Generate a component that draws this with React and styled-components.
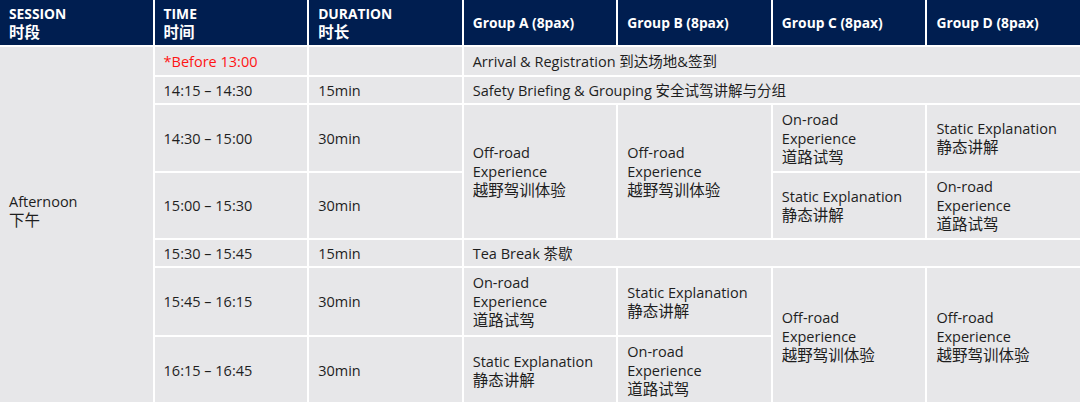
import React from 'react';
import styled, { createGlobalStyle } from 'styled-components';

const GlobalStyle = createGlobalStyle`
  html, body {
    margin: 0;
    padding: 0;
    background: #ffffff;
  }
  body {
    font-family: "Open Sans", "Noto Sans CJK SC", sans-serif;
  }
`;

const OFF_ROAD = ['Off-road', 'Experience', '越野驾训体验'];
const ON_ROAD = ['On-road', 'Experience', '道路试驾'];
const STATIC = ['Static Explanation', '静态讲解'];

const headers = [
  ['SESSION', '时段'],
  ['TIME', '时间'],
  ['DURATION', '时长'],
  ['Group A (8pax)'],
  ['Group B (8pax)'],
  ['Group C (8pax)'],
  ['Group D (8pax)'],
];

// each cell: row/col start, spans, lines
const cells = [
  { row: 2, col: 2, lines: ['*Before 13:00'], red: true },
  { row: 2, col: 3, lines: [] },
  { row: 2, col: 4, colSpan: 4, lines: ['Arrival & Registration 到达场地&签到'] },

  { row: 3, col: 2, lines: ['14:15 – 14:30'] },
  { row: 3, col: 3, lines: ['15min'] },
  { row: 3, col: 4, colSpan: 4, lines: ['Safety Briefing & Grouping 安全试驾讲解与分组'] },

  { row: 4, col: 2, lines: ['14:30 – 15:00'] },
  { row: 4, col: 3, lines: ['30min'] },
  { row: 4, col: 4, rowSpan: 2, lines: OFF_ROAD },
  { row: 4, col: 5, rowSpan: 2, lines: OFF_ROAD },
  { row: 4, col: 6, lines: ON_ROAD },
  { row: 4, col: 7, lines: STATIC },

  { row: 5, col: 2, lines: ['15:00 – 15:30'] },
  { row: 5, col: 3, lines: ['30min'] },
  { row: 5, col: 6, lines: STATIC },
  { row: 5, col: 7, lines: ON_ROAD },

  { row: 6, col: 2, lines: ['15:30 – 15:45'] },
  { row: 6, col: 3, lines: ['15min'] },
  { row: 6, col: 4, colSpan: 4, lines: ['Tea Break 茶歇'] },

  { row: 7, col: 2, lines: ['15:45 – 16:15'] },
  { row: 7, col: 3, lines: ['30min'] },
  { row: 7, col: 4, lines: ON_ROAD },
  { row: 7, col: 5, lines: STATIC },
  { row: 7, col: 6, rowSpan: 2, lines: OFF_ROAD },
  { row: 7, col: 7, rowSpan: 2, lines: OFF_ROAD },

  { row: 8, col: 2, lines: ['16:15 – 16:45'] },
  { row: 8, col: 3, lines: ['30min'] },
  { row: 8, col: 4, lines: STATIC },
  { row: 8, col: 5, lines: ON_ROAD },
];

const isChinese = (s) => /^[\u4e00-\u9fff]+$/.test(s);

const App = () => (
  <>
    <GlobalStyle />
    <Table>
      {headers.map((lines, i) => (
        <HeadCell key={i}>
          {lines.map((l) => (
            <Line key={l} $cjk={isChinese(l)}>{l}</Line>
          ))}
        </HeadCell>
      ))}

      <SessionCell>
        <Line>Afternoon</Line>
        <Line $cjk>下午</Line>
      </SessionCell>

      {cells.map((c, i) => (
        <Cell
          key={i}
          $row={c.row}
          $col={c.col}
          $rowSpan={c.rowSpan || 1}
          $colSpan={c.colSpan || 1}
          $red={c.red}
        >
          {c.lines.map((l) => (
            <Line key={l} $cjk={isChinese(l)}>{l}</Line>
          ))}
        </Cell>
      ))}
    </Table>
  </>
);

const Table = styled.div`
  display: grid;
  grid-template-columns: repeat(7, 1fr);
  grid-template-rows: 45px 28px 26px 66px 65px 26px 67px 67px;
  gap: 2px;
  width: 1080px;
  background: #ffffff;
`;

const HeadCell = styled.div`
  display: flex;
  flex-direction: column;
  justify-content: center;
  padding: 1px 4px 0 9px;
  background: #001e50;
  color: #ffffff;
  font-size: 13.8px;
  font-weight: bold;
  line-height: 18px;
`;

const Cell = styled.div`
  grid-row: ${(p) => p.$row} / span ${(p) => p.$rowSpan};
  grid-column: ${(p) => p.$col} / span ${(p) => p.$colSpan};
  display: flex;
  flex-direction: column;
  justify-content: center;
  padding: 0 4px 0 9px;
  background: #e7e7e9;
  color: ${(p) => (p.$red ? '#ff1414' : '#1e1e1e')};
  font-size: 14.5px;
  line-height: 19px;
`;

const SessionCell = styled(Cell).attrs({ $row: 2, $col: 1, $rowSpan: 7, $colSpan: 1 })`
  padding-bottom: 30px;
`;

const Line = styled.div`
  white-space: nowrap;
  font-size: ${(p) => (p.$cjk ? '15.5px' : 'inherit')};
`;

export default App;
